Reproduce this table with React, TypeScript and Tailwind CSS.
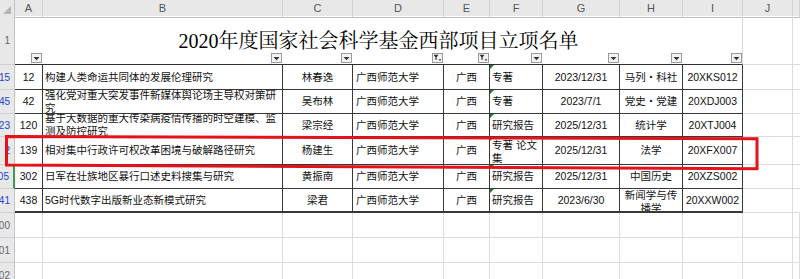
import React from "react";

const COLS =
  "grid grid-cols-[15px_28px_240px_70px_91px_46px_53px_77px_63px_60px_50px_1fr]";

const FONT = "font-['Liberation_Sans','Noto_Sans_CJK_SC',sans-serif]";

type Row = {
  rn: string;
  h: string;
  a: string;
  b: string;
  c: string;
  f: string;
  g: string;
  hh: string;
  i: string;
  sel?: boolean;
  last?: boolean;
};

const rows: Row[] = [
  { rn: "15", h: "h-[25px]", a: "12", b: "构建人类命运共同体的发展伦理研究", c: "林春逸", f: "专著", g: "2023/12/31", hh: "马列・科社", i: "20XKS012" },
  { rn: "45", h: "h-[24px]", a: "42", b: "强化党对重大突发事件新媒体舆论场主导权对策研究", c: "吴布林", f: "专著", g: "2023/7/1", hh: "党史・党建", i: "20XDJ003" },
  { rn: "123", h: "h-[23px]", a: "120", b: "基于大数据的重大传染病疫情传播的时空建模、监测及防控研究", c: "梁宗经", f: "研究报告", g: "2025/12/31", hh: "统计学", i: "20XTJ004" },
  { rn: "2", h: "h-[28px]", a: "139", b: "相对集中行政许可权改革困境与破解路径研究", c: "杨建生", f: "专著 论文集", g: "2025/12/31", hh: "法学", i: "20XFX007" },
  { rn: "305", h: "h-[24px]", a: "302", b: "日军在壮族地区暴行口述史料搜集与研究", c: "黄振南", f: "研究报告", g: "2025/12/31", hh: "中国历史", i: "20XZS002", sel: true },
  { rn: "441", h: "h-[24px]", a: "438", b: "5G时代数字出版新业态新模式研究", c: "梁君", f: "研究报告", g: "2023/6/30", hh: "新闻学与传播学", i: "20XXW002", last: true },
];

const letters = ["A", "B", "C", "D", "E", "F", "G", "H", "I", "J", ""];

const btnCols = [
  "col-start-2",
  "col-start-3",
  "col-start-4",
  "col-start-5",
  "col-start-6",
  "col-start-7",
  "col-start-8",
  "col-start-9",
  "col-start-10",
];

function FilterBtn({ col, filtered }: { col: string; filtered?: boolean }) {
  return (
    <div
      className={`${col} row-start-1 self-end justify-self-end mb-[2px] mr-[1px] w-[11px] h-[10px] border border-[#9a9a9a] bg-[#f3f3f3] flex items-center justify-center`}
    >
      {filtered ? (
        <svg width="9" height="8" viewBox="0 0 9 8">
          <path d="M0.5 0.8h5l-1.9 2.4v3l-1.2-0.8v-2.2z" fill="#333" />
          <path d="M5.6 5.2h2.8l-1.4 1.8z" fill="#333" />
        </svg>
      ) : (
        <svg width="7" height="5" viewBox="0 0 7 5">
          <path d="M0.5 1h6l-3 3.2z" fill="#333" />
        </svg>
      )}
    </div>
  );
}

function RowHeader({ children, blue, sel, cls }: { children?: React.ReactNode; blue?: boolean; sel?: boolean; cls?: string }) {
  return (
    <div
      className={`flex items-center justify-end pr-[4px] overflow-hidden whitespace-nowrap bg-[#e8e8e8] border-b border-b-[#d0d0d0] text-[10px] ${
        sel ? "border-r-2 border-r-[#3d9b52]" : "border-r border-r-[#c4c4c4]"
      } ${blue ? "text-[#2244d4]" : "text-[#666]"} ${cls ?? ""}`}
    >
      {children}
    </div>
  );
}

export default function App() {
  return (
    <div className={`relative w-[800px] h-[279px] overflow-hidden bg-white text-[#111] ${FONT}`}>
      {/* column header */}
      <div className={`${COLS} h-[16px] bg-[#e8e8e8]`}>
        <div className="border-r border-b border-[#c4c4c4] flex items-end justify-end pr-[3px] pb-[3px]">
          <svg width="8" height="8" viewBox="0 0 8 8">
            <path d="M8 0v8h-8z" fill="#b4b4b4" />
          </svg>
        </div>
        {letters.map((l, idx) => (
          <div
            key={idx}
            className="border-r border-b border-r-[#d2d2d2] border-b-[#bdbdbd] flex items-center justify-center text-[11px] text-[#555]"
          >
            {l}
          </div>
        ))}
      </div>

      {/* title row */}
      <div className={`${COLS} h-[49px]`}>
        <RowHeader cls="col-start-1 row-start-1">1</RowHeader>
        <div className="col-start-2 col-end-11 row-start-1 border-b border-b-[#2e2e2e] border-r border-r-[#d9d9d9] flex justify-center pt-[13px]">
          <span className="font-['Liberation_Serif','Noto_Serif_CJK_SC','Noto_Sans_CJK_SC',serif] text-[20px] leading-[24px] text-black">
            2020年度国家社会科学基金西部项目立项名单
          </span>
        </div>
        <div className="col-start-11 row-start-1 border-r border-b border-[#dadada]" />
        <div className="col-start-12 row-start-1 border-b border-[#dadada]" />
        {btnCols.map((c, idx) => (
          <FilterBtn key={c} col={c} filtered={idx === 3 || idx === 4} />
        ))}
      </div>

      {/* data rows */}
      {rows.map((r) => {
        const dark = `border-r border-[#383838] overflow-hidden ${r.last ? "border-b-2" : "border-b"}`;
        const txt = "text-[10.5px] leading-[13px]";
        return (
          <div key={r.rn} className={`${COLS} ${r.h}`}>
            <RowHeader blue sel={r.sel}>{r.rn}</RowHeader>
            <div className={`${dark} ${txt} flex items-center justify-center`}>{r.a}</div>
            <div className={`${dark} ${txt} flex items-center pl-[2px]`}>
              <span>{r.b}</span>
            </div>
            <div className={`${dark} ${txt} flex items-center justify-center`}>{r.c}</div>
            <div className={`${dark} ${txt} flex items-center pl-[3px]`}>广西师范大学</div>
            <div className={`${dark} ${txt} flex items-center justify-center`}>广西</div>
            <div className={`${dark} ${txt} relative flex items-center pl-[2px] ${r.f.length > 4 ? "pt-[2px]" : ""}`}>
              <span className="absolute left-0 top-0 w-0 h-0 border-t-[4px] border-r-[4px] border-t-[#1f7a35] border-r-transparent" />
              <span>{r.f}</span>
            </div>
            <div className={`${dark} ${txt} flex items-center justify-center`}>{r.g}</div>
            <div
              className={`${dark} ${txt} flex items-center justify-center text-center px-[4px] ${
                r.last ? "pt-[4px]" : ""
              }`}
            >
              <span>{r.hh}</span>
            </div>
            <div className={`${dark} ${txt} flex items-center justify-center`}>{r.i}</div>
            <div className="border-r border-b border-[#dadada]" />
            <div className="border-b border-[#dadada]" />
          </div>
        );
      })}

      {/* empty rows */}
      {["500", "501", "502"].map((n) => (
        <div key={n} className={`${COLS} h-[25px]`}>
          <RowHeader>{n}</RowHeader>
          {letters.map((_, idx) => (
            <div key={idx} className="border-r border-b border-[#dcdcdc]" />
          ))}
        </div>
      ))}

      {/* red annotation box */}
      <svg className="absolute inset-0 pointer-events-none" width="800" height="279" viewBox="0 0 800 279">
        <polygon
          points="6.5,136.5 757,138.7 757,168.7 6.5,165"
          fill="none"
          stroke="#e3131b"
          strokeWidth="3"
        />
      </svg>
    </div>
  );
}
